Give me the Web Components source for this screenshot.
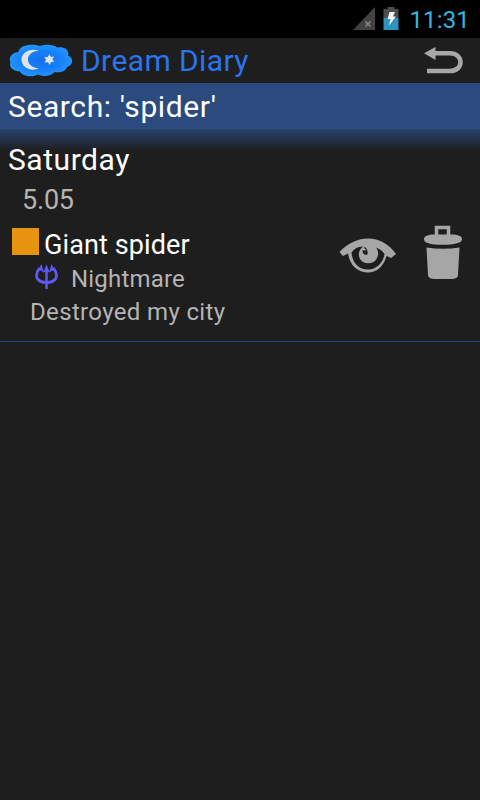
<!DOCTYPE html>
<html lang="en">
<head>
<meta charset="utf-8">
<title>Dream Diary</title>
<style>
html,body{margin:0;height:100%;background:#1e1e1e;overflow:hidden}
body{font-family:Roboto,"Noto Sans",sans-serif;color:#fff}
</style>
</head>
<body>
<dream-app></dream-app>
<script>
const define = (name, html) => {
  const t = document.createElement('template');
  t.innerHTML = html;
  customElements.define(name, class extends HTMLElement {
    constructor() {
      super();
      this.attachShadow({mode: 'open'}).append(t.content.cloneNode(true));
    }
  });
};

define('status-bar', `<style>
:host{display:flex;height:38px;background:#000;align-items:center;justify-content:flex-end;box-sizing:border-box;padding-right:10px;color:#33b5e5;font-size:24px;line-height:38px;letter-spacing:.15px}
svg{display:block;flex:none}
span{margin-left:10px;padding-top:1px}
</style>
<svg width="46" height="26" viewBox="353 6 46 26">
<path d="M353 30L375 7V30Z" fill="#424242"/><path d="M365.500 21.500l5 5m0-5l-5 5" stroke="#8c8c8c" stroke-width="1.400"/>
<path d="M383.500 9h4V7h7v2h4v9h-15z" fill="#4c4c4c"/><path d="M383.500 18h15v12h-15z" fill="#2f94bd"/>
<path d="M389.500 12h5.500l-2 4.500h3l-7 9 1.500-6.500h-3z" fill="#f4f4f4"/></svg>
<span><slot></slot></span>`);

define('cloud-logo', `<style>:host{display:block;width:64px;height:34px}svg{display:block}</style>
<svg width="64" height="34" viewBox="9 43 64 34">
<defs><radialGradient id="g"><stop offset="0" stop-color="#1470f5"/><stop offset=".6" stop-color="#177ff8"/><stop offset="1" stop-color="#2194ff"/></radialGradient></defs>
<path d="M18.500 51C19 44 32 42 40 45C46 42.800 54 43.500 57 46.500C64 45 70 49 68 54.500C74 57 73.500 64 67 66C66 70.500 60 72 54.500 71C51 75.500 43 76 38 73.500C32 77 22 75 20 70.500C13 70 8.500 66 10.500 61.500C8 57 12 51.500 18.500 51Z" fill="url(#g)"/>
<path d="M39 49.500C29 46.500 21.500 52 21.500 58.500C21.500 66 30 71 39 67.500C31.500 66.500 28 63 28 58.500C28 54 31.500 50.500 39 49.500Z" fill="#dfe3e8"/>
<path d="M49.500 53.300l1.400 2.600 3.200-.5-1.700 2.800 2 2.500-3.400.3-1.300 3-1.700-2.800-3.400.3 1.500-2.900-1.900-2.500 3.500-.2z" fill="#dfe3e8"/></svg>`);

define('back-icon', `<style>:host{display:block;width:42px;height:30px}svg{display:block}</style>
<svg width="42" height="30" viewBox="423 46 42 30"><path d="M432 53.300H450C464 53.300 464 71 450 71H427" fill="none" stroke="#a7a7a7" stroke-width="4.600"/><path d="M424 53.300L435.500 47V60Z" fill="#a7a7a7"/></svg>`);

define('app-header', `<style>
:host{display:flex;height:45px;box-sizing:border-box;background:#1e1e1e;padding:0 15px 0 9px;align-items:center;justify-content:space-between}
div{display:flex;align-items:center;gap:8px;color:#2a74ee;font-size:30px;line-height:45px;letter-spacing:.4px}
</style><div><cloud-logo></cloud-logo><span><slot></slot></span></div><back-icon></back-icon>`);

define('search-title', `<style>
:host{display:block;height:46px;background:#2b4a7d;padding-left:8px;font-size:30px;line-height:47px;letter-spacing:.6px}
</style><slot></slot>`);

define('day-section', `<style>
:host{display:block;padding-top:12px;background:linear-gradient(#28416d,#1e1e1e 22px)}
h2{margin:0;padding-left:8px;font:400 30px/37px Roboto,sans-serif;letter-spacing:.55px}
p{margin:0;padding:2px 0 0 22px;font-size:27px;line-height:40px;letter-spacing:-.2px;color:#b4b4b4}
</style><h2><slot name="day"></slot></h2><p><slot name="date"></slot></p><slot></slot>`);

define('trident-icon', `<style>:host{display:block;width:24px;height:26px}svg{display:block}</style>
<svg width="24" height="26" viewBox="35 265 24 26"><path d="M46.500 270V290" stroke="#6058f4" stroke-width="2.500"/><path d="M39.500 269C33.500 277 37 283.500 46.500 283.500C56 283.500 59.500 277 53.500 269" fill="none" stroke="#6058f4" stroke-width="2.800"/><path d="M46.500 265.500l3 7.500h-6zM41.500 265l2.500 9-3-2.500-3.500 1zM51.500 265l-2.500 9 3-2.500 3.500 1z" fill="#6058f4"/></svg>`);

define('eye-icon', `<style>:host{display:block;width:58px;height:38px}svg{display:block}</style>
<svg width="58" height="38" viewBox="339 237 58 38">
<path d="M339.500 252C348 243 358 238.500 368 238.500C379 238.500 389 244 396 254L391 258L386.500 256C384 266 377 272.500 368 272.500C358 272.500 350 266 348 253.500L343 256Z" fill="#a6a6a6"/>
<path d="M351.500 252.500C354 248.500 358 246.500 363 246.500L366.500 250.500L362.500 250.200C362.500 254 364.500 255.500 367.500 254.500C368 252 367.500 250 366 248L363 246.500C359 250 357.500 254 360 259C363 264.500 373 265 376.500 259C379 255 378.500 250.500 376 247.500C380 249 382.500 251 384.500 254C383 263.500 376 269.500 368 269.500C359 269.500 352.500 263.500 351.500 252.500Z" fill="#1e1e1e"/></svg>`);

define('trash-icon', `<style>:host{display:block;width:40px;height:56px}svg{display:block}</style>
<svg width="40" height="56" viewBox="423 225 40 56"><path d="M436.500 235V227.500H448.500V235" fill="none" stroke="#a6a6a6" stroke-width="3.500"/>
<path d="M434 234.500H451C458 234.500 462 236 462 239C462 242.500 457 243.800 450 244.500Q443 245 435 244.500C428 243.800 424 242.500 424 239C424 236 428 234.500 434 234.500Z" fill="#a6a6a6"/>
<path d="M426.500 247.500Q443 250 459.500 247.500L458 275Q458 279 451 279H435Q428 279 428 275Z" fill="#a6a6a6"/></svg>`);

define('dream-entry', `<style>
:host{display:flex;justify-content:space-between;height:121px;border-bottom:1px solid #25478a;box-sizing:content-box}
.text{padding-top:8px}
.name{display:flex;gap:5px;padding-left:12px;font-size:27px;line-height:35px;height:34px;letter-spacing:.1px}
.name i{width:27px;height:27px;background:#e6930f}
.type{display:flex;align-items:center;gap:12px;padding-left:35px;letter-spacing:.2px}
.type,.note{font-size:24px;line-height:33px;height:33px;color:#b4b4b4}
.type span{padding-top:1px}
.note{padding-left:30px;letter-spacing:.35px;line-height:35px}
trident-icon{margin-top:-3px}
.act{display:flex;gap:26px;padding:5px 17px 0 0}
eye-icon{margin-top:12px}
</style><div class="text"><div class="name"><i></i><span><slot name="name"></slot></span></div>
<div class="type"><trident-icon></trident-icon><span><slot name="type"></slot></span></div>
<div class="note"><slot name="note"></slot></div></div>
<div class="act"><eye-icon></eye-icon><trash-icon></trash-icon></div>`);

define('dream-app', `<style>:host{display:flex;flex-direction:column;width:480px;height:800px;background:#1e1e1e}</style>
<status-bar>11:31</status-bar><app-header>Dream Diary</app-header><search-title>Search: 'spider'</search-title>
<day-section><span slot="day">Saturday</span><span slot="date">5.05</span>
<dream-entry><span slot="name">Giant spider</span><span slot="type">Nightmare</span><span slot="note">Destroyed my city</span></dream-entry></day-section>`);
</script>
</body>
</html>
